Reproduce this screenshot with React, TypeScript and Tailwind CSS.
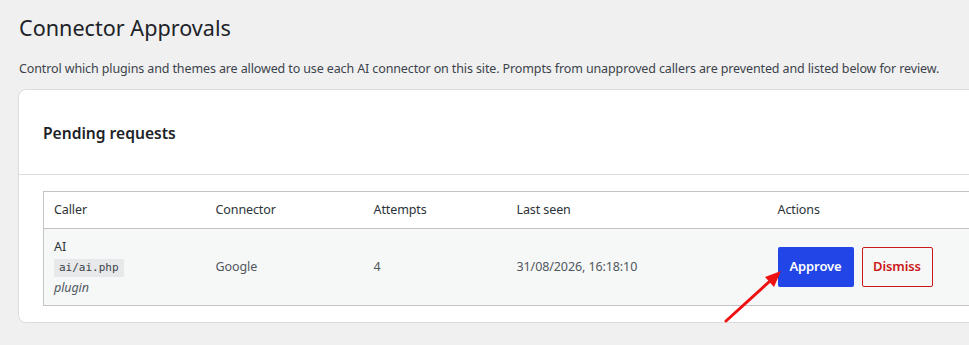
import React from "react";

export default function App() {
  const font = { fontFamily: '"Noto Sans", "Open Sans", sans-serif' };
  return (
    <div className="relative w-[969px] h-[345px] overflow-hidden bg-[#f0f0f1] text-[#3c434a]" style={font}>
      <div className="pl-[19px] pt-[13px] w-[1100px]">
        <h1 className="text-[21.6px] leading-[30px] text-[#1d2327] font-normal">Connector Approvals</h1>
        <p className="mt-[16px] text-[12.5px] tracking-[-0.12px] leading-[20px] text-[#3c434a]">
          Control which plugins and themes are allowed to use each AI connector on this site. Prompts from unapproved callers are prevented and listed below for review.
        </p>
        <div className="mt-[10px] -ml-[1px] w-[1060px] bg-white border border-[#dcdcde] rounded-[8px]">
          <div className="h-[85px] border-b border-[#dcdcde] flex items-center pl-[24px]">
            <h2 className="text-[15.6px] font-semibold text-[#1d2327] leading-[24px] pt-[1px]">Pending requests</h2>
          </div>
          <div className="pt-[16px] pb-[16px] pl-[24px]">
            <table className="w-[1030px] border border-[#c3c4c7] border-collapse text-[12.5px] tracking-[-0.1px] text-left">
              <thead>
                <tr className="h-[37px] border-b border-[#c3c4c7]">
                  <th className="w-[162px] pl-[10px] font-normal text-[#2c3338]">Caller</th>
                  <th className="w-[157px] pl-[10px] font-normal text-[#2c3338]">Connector</th>
                  <th className="w-[143px] pl-[11px] font-normal text-[#2c3338]">Attempts</th>
                  <th className="w-[262px] pl-[11px] font-normal text-[#2c3338]">Last seen</th>
                  <th className="pl-[10px] font-normal text-[#2c3338]">Actions</th>
                </tr>
              </thead>
              <tbody>
                <tr className="h-[77px] bg-[#f6f7f7] text-[#50575e]">
                  <td className="pl-[10px] align-top pt-[9px]">
                    <div className="leading-[18px] text-[#2c3338]">AI</div>
                    <div className="mt-[2px]">
                      <code
                        className="inline-block bg-[#e7e8e9] px-[5px] leading-[18px] text-[#3c434a]"
                        style={{ fontFamily: '"DejaVu Sans Mono", "Liberation Mono", monospace', fontSize: "11px", letterSpacing: "0px" }}
                      >
                        ai/ai.php
                      </code>
                    </div>
                    <div className="italic leading-[20px] mt-[1px]">plugin</div>
                  </td>
                  <td className="pl-[10px]">Google</td>
                  <td className="pl-[11px]">4</td>
                  <td className="pl-[11px]">31/08/2026, 16:18:10</td>
                  <td className="pl-[10px]">
                    <div className="flex gap-[8px]">
                      <button className="h-[40px] w-[76px] rounded-[2px] bg-[#2145e6] text-white text-[13px] font-semibold">Approve</button>
                      <button className="h-[40px] w-[71px] rounded-[2px] border border-[#cc1818] text-[#cc1818] text-[13px] font-semibold bg-transparent">Dismiss</button>
                    </div>
                  </td>
                </tr>
              </tbody>
            </table>
          </div>
        </div>
      </div>
      <svg className="absolute left-0 top-0 pointer-events-none" width="969" height="345">
        <line x1="726" y1="321" x2="770" y2="281" stroke="#ee1111" strokeWidth="3" strokeLinecap="round" />
        <polygon points="781,271 765,277 774,287" fill="#ee1111" />
      </svg>
    </div>
  );
}
